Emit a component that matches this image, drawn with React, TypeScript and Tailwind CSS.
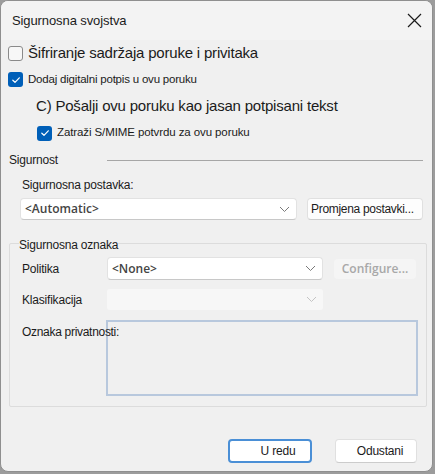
import React from "react";

function Check({ checked }: { checked: boolean }) {
  if (!checked) {
    return <span className="block w-[15px] h-[15px] rounded-[3px] border border-[#8a8a8a] bg-[#f7f7f7] shrink-0" />;
  }
  return (
    <span className="flex items-center justify-center w-[15px] h-[15px] rounded-[3px] bg-[#005fb8] shrink-0">
      <svg width="10" height="10" viewBox="0 0 10 10" fill="none">
        <path d="M1.8 5.2 L4 7.3 L8.3 2.8" stroke="white" strokeWidth="1.2" strokeLinecap="round" strokeLinejoin="round" />
      </svg>
    </span>
  );
}

function Chevron({ color }: { color: string }) {
  return (
    <svg width="11" height="7" viewBox="0 0 11 7" fill="none">
      <path d="M1 1 L5.5 5.5 L10 1" stroke={color} strokeWidth="1" />
    </svg>
  );
}

export default function App() {
  return (
    <div className="w-[435px] h-[474px] bg-[#9c9c9c] font-['Liberation_Sans',Arial,sans-serif] text-[#1b1b1b] text-[12px]">
      <div className="w-[433px] h-[472px] rounded-[8px] border border-[#8f8f8f] bg-[#f0f0f0] overflow-hidden flex flex-col">
        {/* title bar */}
        <div className="h-[39px] shrink-0 flex items-center justify-between pl-[11px] pr-[10px] bg-[#f3f3f3]">
          <span className="text-[13px] tracking-[-0.1px]">Sigurnosna svojstva</span>
          <svg width="15" height="15" viewBox="0 0 15 15">
            <path d="M1 1 L14 14 M14 1 L1 14" stroke="#1b1b1b" strokeWidth="1.2" />
          </svg>
        </div>

        <div className="flex flex-col pl-[7px] pr-[6px]">
          <div className="h-[26px] flex items-center gap-[5px]">
            <Check checked={false} />
            <span className="text-[15px] tracking-[-0.2px]">Šifriranje sadržaja poruke i privitaka</span>
          </div>
          <div className="h-[27px] flex items-center gap-[5px]">
            <Check checked={true} />
            <span className="text-[11.5px] tracking-[-0.2px]">Dodaj digitalni potpis u ovu poruku</span>
          </div>
          <div className="h-[26px] flex items-center pl-[28px]">
            <span className="text-[15px] tracking-[-0.2px]">C) Pošalji ovu poruku kao jasan potpisani tekst</span>
          </div>
          <div className="h-[28px] flex items-center gap-[5px] pl-[29px]">
            <Check checked={true} />
            <span className="text-[11.5px] tracking-[-0.1px]">Zatraži S/MIME potvrdu za ovu poruku</span>
          </div>

          <div className="h-[26px] flex items-center gap-[8px] pl-[1px]">
            <span className="text-[12px] tracking-[-0.2px] w-[90px]">Sigurnost</span>
            <div className="flex-1 h-px bg-[#a6a6a6] mr-[3px]" />
          </div>
          <div className="h-[24px] flex items-center pl-[14px]">
            <span className="text-[12px] tracking-[-0.2px]">Sigurnosna postavka:</span>
          </div>
          <div className="mt-[1px] h-[22px] flex items-stretch pl-[12px] gap-[10px]">
            <div className="w-[277px] rounded-[4px] bg-white border border-[#e2e2e2] border-b-[#c8c8c8] flex items-center justify-between pl-[4px] pr-[6px]">
              <span className="font-semibold text-[12px] text-[#444] font-['Open_Sans',sans-serif]">&lt;Automatic&gt;</span>
              <Chevron color="#7a7a7a" />
            </div>
            <div className="w-[116px] rounded-[4px] bg-[#fdfdfd] border border-[#e0e0e0] border-b-[#cdcdcd] flex items-center pl-[3px]">
              <span className="text-[12px] tracking-[-0.3px]">Promjena postavki...</span>
            </div>
          </div>

          {/* group box */}
          <div className="relative mt-[23px] ml-[1px] w-[418px] h-[164px] border border-[#dcdcdc] rounded-[2px] pl-[12px]">
            <span className="absolute left-[9px] top-[-6px] bg-[#f0f0f0] text-[12px] tracking-[-0.2px] leading-[14px]">Sigurnosna oznaka</span>
            <div className="mt-[13px] h-[23px] flex items-center">
              <span className="w-[85px] text-[12px] tracking-[-0.2px]">Politika</span>
              <div className="w-[216px] h-[23px] rounded-[4px] bg-white border border-[#e2e2e2] border-b-[#c8c8c8] flex items-center justify-between pl-[4px] pr-[6px]">
                <span className="font-semibold text-[12px] text-[#444] font-['Open_Sans',sans-serif]">&lt;None&gt;</span>
                <Chevron color="#7a7a7a" />
              </div>
              <div className="ml-[11px] w-[82px] h-[20px] rounded-[4px] bg-[#f5f5f5] flex items-center justify-center">
                <span className="font-semibold text-[12px] text-[#a8a8a8] font-['Open_Sans',sans-serif]">Configure...</span>
              </div>
            </div>
            <div className="mt-[9px] h-[21px] flex items-center">
              <span className="w-[85px] text-[12px] tracking-[-0.2px]">Klasifikacija</span>
              <div className="w-[216px] h-[21px] rounded-[3px] bg-[#f7f7f7] flex items-center justify-end pr-[6px]">
                <Chevron color="#c4c4c4" />
              </div>
            </div>
            <div className="mt-[10px] flex items-start">
              <span className="relative z-10 w-[84px] whitespace-nowrap text-[12px] tracking-[-0.3px] pt-[3px]">Oznaka privatnosti:</span>
              <div className="w-[312px] h-[76px] border-2 border-[#b8c8dd] bg-[#f0f0f0]" />
            </div>
          </div>

          <div className="mt-[32px] flex justify-end gap-[23px] pr-[9px]">
            <div className="w-[84px] h-[24px] rounded-[4px] bg-white border-2 border-[#4a8fd6] flex items-center justify-center pl-[16px]">
              <span className="text-[12px] tracking-[-0.2px]">U redu</span>
            </div>
            <div className="w-[82px] h-[24px] rounded-[4px] bg-white border border-[#e0e0e0] border-b-[#cccccc] flex items-center justify-center pl-[8px]">
              <span className="text-[12px] tracking-[-0.2px]">Odustani</span>
            </div>
          </div>
        </div>
      </div>
    </div>
  );
}
